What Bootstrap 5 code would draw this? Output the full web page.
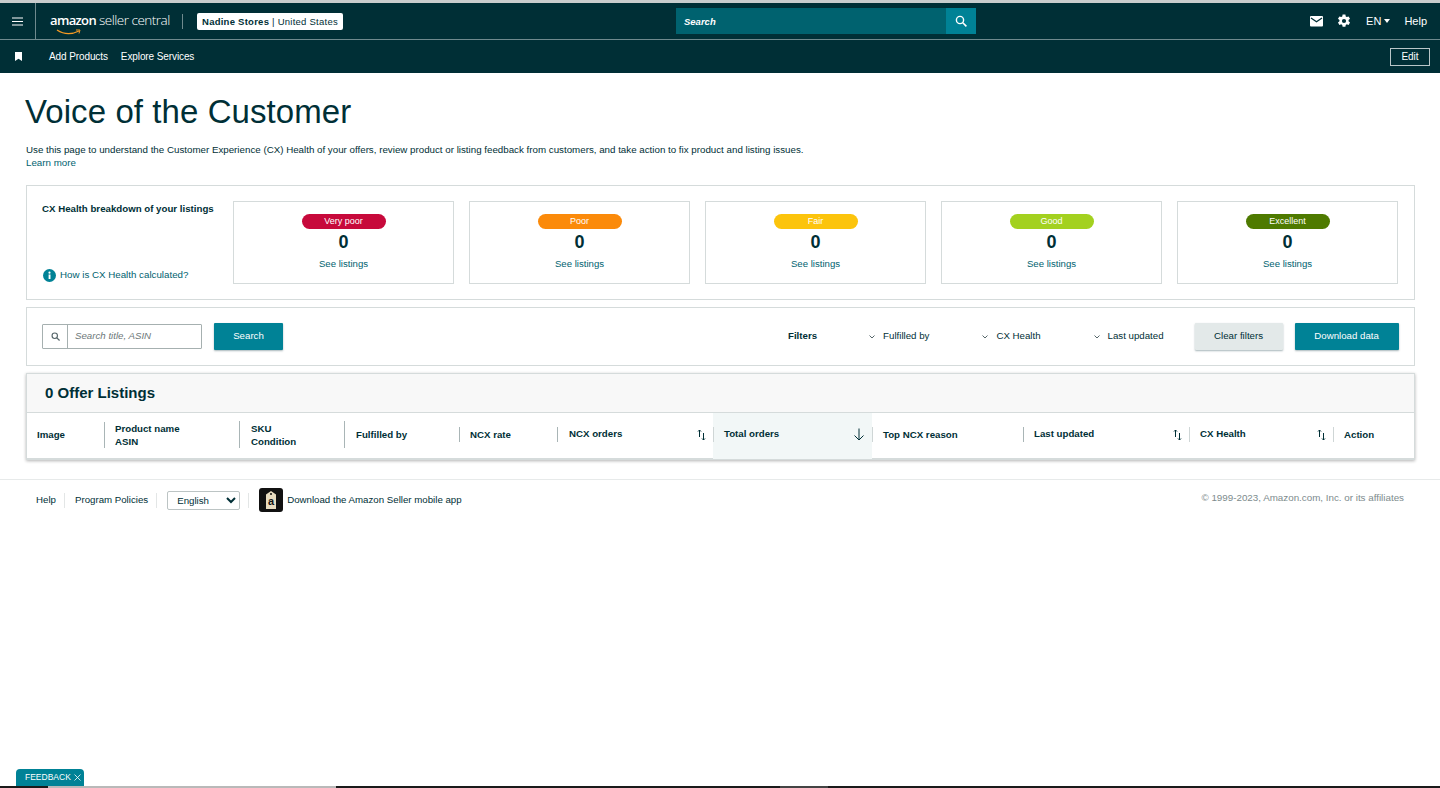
<!DOCTYPE html>
<html lang="en">
<head>
  <meta charset="UTF-8" />
  <meta name="viewport" content="width=device-width, initial-scale=1.0"/>
  <title>Voice of the Customer</title>
  <link href="https://cdn.jsdelivr.net/npm/bootstrap@5.3.3/dist/css/bootstrap.min.css" rel="stylesheet" />
  <style>
    html, body { height: 788px; overflow: hidden; }
    body {
      font-family: "Liberation Sans", Arial, sans-serif;
      font-size: 10px;
      color: #002f36;
      background: #fff;
      border-top: 3px solid #c9cdcd;
      display: flex;
      flex-direction: column;
    }
    a { color: #00626f; text-decoration: none; }

    /* top nav */
    .sc-top { height: 37px; background: #002f36; border-bottom: 1px solid #6f8a8e; color: #fff; }
    .sc-burger { width: 36px; height: 36px; border-right: 1px solid #6f8a8e; }
    .sc-logo { width: 132px; margin-left: 14px; position: relative; line-height: 1; white-space: nowrap; }
    .sc-logo-a { font-family: "Open Sans", sans-serif; font-size: 13px; font-weight: 600; letter-spacing: -.65px; }
    .sc-logo-b { font-family: "Open Sans", sans-serif; font-size: 13.5px; font-weight: 300; letter-spacing: -.5px; margin-left: 3px; }
    .sc-smile { position: absolute; left: 6px; top: 15px; }
    .sc-vr { width: 1px; height: 15px; background: #6f8a8e; margin: 0 14px 0 0; }
    .sc-store { background: #fff; color: #002f36; border-radius: 2px; height: 17px; width: 146px; line-height: 17px; text-align: center; font-size: 9.5px; letter-spacing: .25px; }
    .sc-store b { font-weight: 700; }
    .sc-global { position: absolute; left: 676px; top: 5px; width: 300px; height: 26px; display: flex; }
    .sc-global-in { flex: 1; background: #00626f; color: #fff; font-style: italic; font-weight: 700; font-size: 9.5px; line-height: 27px; padding-left: 8px; }
    .sc-global-btn { width: 30px; background: #008296; display: flex; align-items: center; justify-content: center; }
    .sc-right { font-size: 11px; font-weight: 400; }
    .sc-caret { width: 0; height: 0; border: 3px solid transparent; border-top: 4px solid #fff; border-bottom: 0; display: inline-block; vertical-align: 2px; margin-left: 3px; }
    .sc-sub { height: 33px; background: #002f36; color: #fff; }
    .sc-sub span { font-size: 10px; letter-spacing: -.1px; }
    .sc-edit { width: 40px; height: 18px; border: 1px solid #b9c6c8; color: #fff; text-align: center; line-height: 16px; font-size: 10px; }

    /* page */
    .sc-title { font-size: 33px; font-weight: 400; line-height: 38px; margin: 0 0 0 -1px; letter-spacing: .08px; }
    .sc-intro { font-size: 9.75px; line-height: 13px; margin: 0; color: #002f36; }
    .sc-box { border: 1px solid #d5dbdb; background: #fff; }
    .sc-health { height: 115px; padding: 15px; }
    .sc-health-side { width: 191px; flex: none; padding-top: 1px; }
    .sc-health-side b { font-size: 9.7px; color: #002f36; }
    .sc-help { font-size: 9.75px; margin-bottom: 1px; }
    .sc-tile { width: 221px; height: 83px; border: 1px solid #d5dbdb; padding-top: 12px; text-align: center; font-size: 9.6px; }
    .sc-tiles { gap: 15px; }
    .sc-pill { width: 84px; height: 15px; line-height: 15px; border-radius: 8px; margin: 0 auto; color: #fff; font-size: 9px; }
    .sc-count { font-size: 18px; font-weight: 700; line-height: 25px; margin-top: 1px; margin-bottom: 2px; }
    .sc-vpoor { background: #c7093b; }
    .sc-poor { background: #fb8a0a; }
    .sc-fair { background: #fcc40c; }
    .sc-good { background: #a3d11f; }
    .sc-excel { background: #4e7a00; }

    .sc-tools { height: 59px; padding: 0 15px; }
    .sc-find { width: 160px; height: 25px; border: 1px solid #a6b0b0; border-radius: 1px; }
    .sc-find-ic { width: 25px; border-right: 1px solid #a6b0b0; }
    .sc-find-tx { padding-left: 7px; font-style: italic; color: #6c7778; font-size: 9.7px; }
    .sc-btn { height: 27px; line-height: 25px; border-radius: 1px; font-size: 9.7px; text-align: center; box-shadow: 0 1px 2px rgba(0,47,54,.35); }
    .sc-teal { background: #008296; color: #fff; }
    .sc-grey { background: #e3e9e9; color: #002f36; }
    .sc-filter { color: #002f36; font-size: 9.7px; white-space: nowrap; }
    .sc-filter svg { margin-right: 8px; }

    .sc-list { height: 87px; box-shadow: 0 1px 3px rgba(0,0,0,.3); border-bottom: 2px solid #d5dbdb; }
    .sc-list-head { height: 39px; background: #f8f8f8; border-bottom: 1px solid #d5dbdb; padding-left: 18px; font-size: 15px; font-weight: 700; line-height: 38px; color: #002f36; }
    .sc-cols { table-layout: fixed; width: 100%; margin: 0; }
    .sc-cols th { height: 46px; padding: 0 0 3px; vertical-align: middle; font-size: 9.7px; font-weight: 700; line-height: 13px; color: #002f36; background: transparent; border: 0; box-shadow: none; }
    .sc-th { border-left: 1px solid #a9b5b6; padding-left: 10px; display: flex; align-items: center; justify-content: space-between; min-height: 15px; }
    .sc-th.sc-tall { min-height: 27px; padding-left: 11px; }
    .sc-th.sc-soft { border-left-color: #cfd6d6; }
    .sc-cols th.sc-active { background: #f2f7f7; }
    .sc-cols svg { margin-right: 7px; flex: none; }
    .sc-lift { margin-bottom: 2px; }

    .sc-foot { margin-top: 19px; border-top: 1px solid #e7eaea; padding: 0 36px; height: 41px; }
    .sc-foot-link { font-size: 9.7px; color: #002f36; }
    .sc-foot-vr { width: 1px; height: 15px; background: #e3e6e6; margin: 0 10px 0 8px; }
    .sc-lang { width: 73px; height: 19px; font-size: 9.7px; border: 1px solid #bcc4c4; border-radius: 2px; padding: 0 0 0 5px; color: #002f36; background: #fff; font-family: inherit; }
    .sc-copy { color: #7d8b8d; font-size: 9.8px; margin-top: -3px; }

    .sc-strip { margin-top: auto; height: 2px; display: flex; background: #1a1a1a; }
    .sc-strip i { display: block; margin-left: 48px; width: 288px; background: #b9b9b9; }
    .sc-strip i + i { margin-left: 444px; width: 48px; background: #444; }
    .sc-feedback { position: fixed; left: 16px; bottom: 2px; width: 68px; height: 17px; background: #008296; color: #fff; border-radius: 4px 4px 0 0; font-size: 8.5px; line-height: 16px; padding-left: 9px; white-space: nowrap; }
  </style>
</head>
<body>
  <nav class="sc-top d-flex align-items-center position-relative">
    <div class="sc-burger d-flex align-items-center justify-content-center">
      <svg width="11" height="9" viewBox="0 0 11 9"><path d="M0 1h11M0 4.500h11M0 8h11" stroke="#fff" stroke-width="1.200"/></svg>
    </div>
    <div class="sc-logo">
      <span class="sc-logo-a">amazon</span><span class="sc-logo-b">seller central</span>
      <svg class="sc-smile" width="26" height="7" viewBox="0 0 26 7"><path d="M1 1c6 4 14 5 22 1" fill="none" stroke="#f59a23" stroke-width="1.200"/><path d="M20 1l4 0-1 3.500" fill="none" stroke="#f59a23" stroke-width="1"/></svg>
    </div>
    <div class="sc-vr"></div>
    <div class="sc-store"><b>Nadine Stores</b> | United States</div>
    <div class="sc-global">
      <div class="sc-global-in">Search</div>
      <div class="sc-global-btn">
        <svg width="12" height="12" viewBox="0 0 12 12"><circle cx="5" cy="5" r="3.600" fill="none" stroke="#fff" stroke-width="1.400"/><path d="M7.800 7.800l3.600 3.600" stroke="#fff" stroke-width="1.600"/></svg>
      </div>
    </div>
    <div class="sc-right ms-auto d-flex align-items-center">
      <svg width="13" height="11" viewBox="0 0 13 11" style="margin-right: 14px"><rect width="13" height="10.500" rx="1" fill="#fff"/><path d="M1 2l5.500 3.800L12 2" fill="none" stroke="#002f36" stroke-width="1.300"/></svg>
      <svg width="14" height="14" viewBox="0 0 24 24" style="margin-right: 15px"><path fill="#fff" fill-rule="evenodd" d="M14.400 1l.6 3.200 1.800 1 3.100-1.100 2.400 4.200-2.500 2.100v2.100l2.500 2.100-2.400 4.200-3.100-1.100-1.800 1-.6 3.300H9.600L9 18.700l-1.800-1-3.100 1.100-2.400-4.200 2.500-2.100v-2.100L1.700 8.300l2.400-4.200 3.100 1.100 1.800-1L9.600 1zM12 8.400a3.600 3.600 0 1 0 0 7.200 3.600 3.600 0 0 0 0-7.200z"/></svg>
      <span>EN<span class="sc-caret"></span></span>
      <span style="margin: 0 13px 0 14px">Help</span>
    </div>
  </nav>
  <div class="sc-sub d-flex align-items-center">
    <svg width="7" height="9" viewBox="0 0 7 9" style="margin-left: 15px"><path d="M0 0h7v9L3.500 6.800 0 9z" fill="#fff"/></svg>
    <span style="margin-left: 27px">Add Products</span>
    <span style="margin-left: 13px">Explore Services</span>
    <div class="sc-edit ms-auto" style="margin-right: 10px">Edit</div>
  </div>

  <div style="padding: 20px 25px 0 26px">
    <h1 class="sc-title">Voice of the Customer</h1>
    <p class="sc-intro" style="margin-top: 12px">Use this page to understand the Customer Experience (CX) Health of your offers, review product or listing feedback from customers, and take action to fix product and listing issues.<br><a href="#">Learn more</a></p>

    <section class="sc-box sc-health d-flex" style="margin-top: 16px">
      <div class="sc-health-side d-flex flex-column justify-content-between">
        <b>CX Health breakdown of your listings</b>
        <a href="#" class="sc-help d-flex align-items-center">
          <svg width="13" height="13" viewBox="0 0 13 13" style="margin: 0 4px 0 1px"><circle cx="6.500" cy="6.500" r="6.500" fill="#008296"/><rect x="5.600" y="5.500" width="1.900" height="4.500" fill="#fff"/><circle cx="6.500" cy="3.700" r="1.100" fill="#fff"/></svg>
          How is CX Health calculated?
        </a>
      </div>
      <div class="sc-tiles d-flex flex-grow-1">
        <div class="sc-tile"><div class="sc-pill sc-vpoor">Very poor</div><div class="sc-count">0</div><a href="#">See listings</a></div>
        <div class="sc-tile"><div class="sc-pill sc-poor">Poor</div><div class="sc-count">0</div><a href="#">See listings</a></div>
        <div class="sc-tile"><div class="sc-pill sc-fair">Fair</div><div class="sc-count">0</div><a href="#">See listings</a></div>
        <div class="sc-tile"><div class="sc-pill sc-good">Good</div><div class="sc-count">0</div><a href="#">See listings</a></div>
        <div class="sc-tile"><div class="sc-pill sc-excel">Excellent</div><div class="sc-count">0</div><a href="#">See listings</a></div>
      </div>
    </section>

    <section class="sc-box sc-tools d-flex align-items-center" style="margin-top: 7px">
      <div class="sc-find d-flex">
        <div class="sc-find-ic d-flex align-items-center justify-content-center">
          <svg width="9" height="9" viewBox="0 0 12 12"><circle cx="5" cy="5" r="3.600" fill="none" stroke="#56666a" stroke-width="1.500"/><path d="M7.800 7.800l3.600 3.600" stroke="#56666a" stroke-width="1.700"/></svg>
        </div>
        <div class="sc-find-tx align-self-center">Search title, ASIN</div>
      </div>
      <div class="sc-btn sc-teal" style="width: 69px; margin-left: 12px">Search</div>
      <b class="sc-filter" style="margin-left: 505px">Filters</b>
      <div class="sc-filter" style="margin-left: 52px"><svg width="6" height="4" viewBox="0 0 6 4"><path d="M.5.500L3 3 5.500.500" fill="none" stroke="#56666a"/></svg>Fulfilled by</div>
      <div class="sc-filter" style="margin-left: 53px"><svg width="6" height="4" viewBox="0 0 6 4"><path d="M.5.500L3 3 5.500.500" fill="none" stroke="#56666a"/></svg>CX Health</div>
      <div class="sc-filter" style="margin-left: 53px"><svg width="6" height="4" viewBox="0 0 6 4"><path d="M.5.500L3 3 5.500.500" fill="none" stroke="#56666a"/></svg>Last updated</div>
      <div class="sc-btn sc-grey" style="width: 88px; margin-left: 31px">Clear filters</div>
      <div class="sc-btn sc-teal" style="width: 104px; margin-left: 12px">Download data</div>
    </section>

    <section class="sc-box sc-list" style="margin-top: 7px">
      <div class="sc-list-head">0 Offer Listings</div>
      <table class="table sc-cols">
        <colgroup>
          <col style="width: 77px"><col style="width: 135px"><col style="width: 105px"><col style="width: 115px"><col style="width: 98px"><col style="width: 156px"><col style="width: 159px"><col style="width: 151px"><col style="width: 166px"><col style="width: 144px"><col>
        </colgroup>
        <thead>
          <tr>
            <th style="padding-left: 10px">Image</th>
            <th><div class="sc-th"><span>Product name<br>ASIN</span></div></th>
            <th><div class="sc-th sc-tall"><span>SKU<br>Condition</span></div></th>
            <th><div class="sc-th sc-tall">Fulfilled by</div></th>
            <th><div class="sc-th">NCX rate</div></th>
            <th><div class="sc-th"><span class="sc-lift" style="margin-left: 1px">NCX orders</span><svg width="9" height="12" viewBox="0 0 9 12"><path d="M2.500 8V1M1 2.500L2.500 1 4 2.500M6.500 4v7M5 9.500L6.500 11 8 9.500" fill="none" stroke="#002f36"/></svg></div></th>
            <th class="sc-active"><div class="sc-th sc-soft"><span class="sc-lift">Total orders</span><svg width="12" height="13" viewBox="0 0 12 13"><path d="M6 .5v11.500M1.500 7.500L6 12l4.500-4.500" fill="none" stroke="#002f36"/></svg></div></th>
            <th><div class="sc-th sc-soft">Top NCX reason</div></th>
            <th><div class="sc-th"><span class="sc-lift">Last updated</span><svg width="9" height="12" viewBox="0 0 9 12"><path d="M2.500 8V1M1 2.500L2.500 1 4 2.500M6.500 4v7M5 9.500L6.500 11 8 9.500" fill="none" stroke="#002f36"/></svg></div></th>
            <th><div class="sc-th sc-soft"><span class="sc-lift">CX Health</span><svg width="9" height="12" viewBox="0 0 9 12"><path d="M2.500 8V1M1 2.500L2.500 1 4 2.500M6.500 4v7M5 9.500L6.500 11 8 9.500" fill="none" stroke="#002f36"/></svg></div></th>
            <th><div class="sc-th sc-soft">Action</div></th>
          </tr>
        </thead>
      </table>
    </section>
  </div>

  <footer class="sc-foot d-flex align-items-center">
    <a href="#" class="sc-foot-link">Help</a>
    <div class="sc-foot-vr"></div>
    <a href="#" class="sc-foot-link">Program Policies</a>
    <div class="sc-foot-vr"></div>
    <select class="sc-lang"><option>English</option></select>
    <div class="sc-foot-vr"></div>
    <svg width="24" height="24" viewBox="0 0 24 24" style="margin-right: 4px"><rect width="24" height="24" rx="3" fill="#111"/><path d="M7 6.500l5-3.500 5 3.500V21H7z" fill="#e8dcc0"/><circle cx="12" cy="6" r="1" fill="#111"/><text x="12" y="17" text-anchor="middle" font-size="11" font-weight="700" fill="#111" font-family="Liberation Sans">a</text></svg>
    <a href="#" class="sc-foot-link">Download the Amazon Seller mobile app</a>
    <div class="sc-copy ms-auto">© 1999-2023, Amazon.com, Inc. or its affiliates</div>
  </footer>

  <div class="sc-strip"><i></i><i></i></div>
  <div class="sc-feedback">FEEDBACK <svg width="7" height="7" viewBox="0 0 7 7" style="margin-left: 1px; vertical-align: -1px"><path d="M.5.500l6 6M6.500.500l-6 6" stroke="#fff" stroke-width=".8"/></svg></div>
</body>
</html>
